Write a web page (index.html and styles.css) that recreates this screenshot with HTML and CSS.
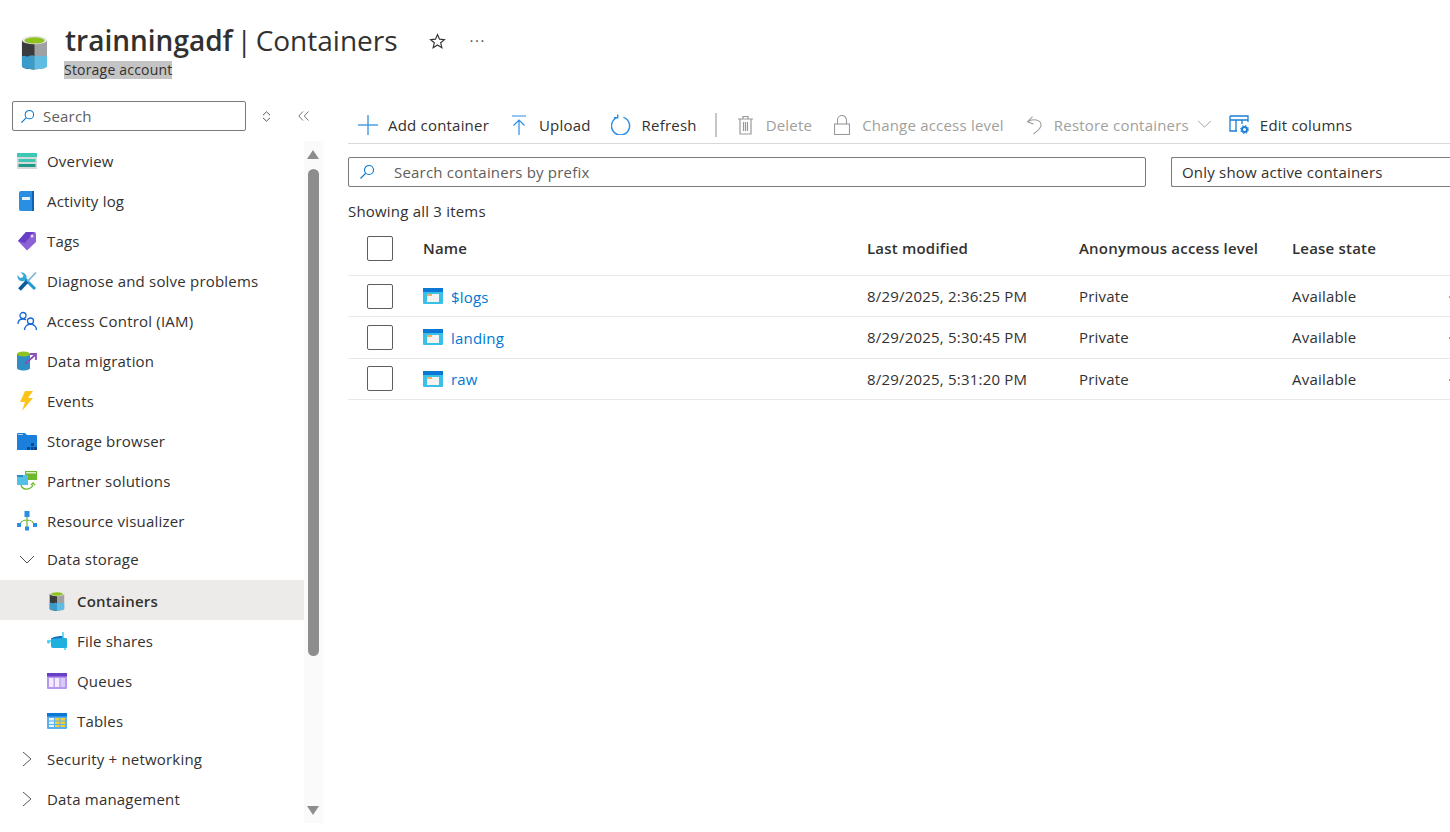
FILE: index.html
```html
<!DOCTYPE html>
<html lang="en">
<head>
<meta charset="UTF-8">
<title>trainningadf | Containers</title>
<link rel="stylesheet" href="styles.css">
</head>
<body>

<svg class="sprites" width="0" height="0">
  <symbol id="i-bucket" viewBox="0 0 28 36">
    <path d="M1 5v27c0 2 6 3.500 13 3.500s13-1.500 13-3.500V5z" fill="#a0a1a2"/>
    <path d="M1 5v27c0 2 6 3.500 13 3.500V5z" fill="#3b3b3d"/>
    <path d="M1 22c3-2 5 1 7 0s4-2 6 0v13.500C7 35.500 1 34 1 32z" fill="#3b9ccb"/>
    <path d="M14 22c3-2 5 1 7 0s4-1 6 0v10c0 2-6 3.500-13 3.500z" fill="#5fbce2"/>
    <ellipse cx="14" cy="5" rx="13" ry="4.500" fill="#e8e8e8"/>
    <ellipse cx="14" cy="5.500" rx="10.500" ry="3.200" fill="#8fc31f"/>
  </symbol>
  <symbol id="i-container" viewBox="0 0 20 16">
    <rect width="20" height="16" rx="1" fill="#38c0e8"/>
    <rect width="20" height="4" fill="#0a78d4"/>
    <rect x="4" y="6" width="12" height="8" fill="#f4f3ef"/>
    <rect x="4" y="6" width="5" height="2" fill="#f0b060"/>
  </symbol>
</svg>

<header class="page-head">
  <svg class="head-logo"><use href="#i-bucket"/></svg>
  <div class="head-text">
    <h1><b>trainningadf</b> | Containers</h1>
    <span class="subtitle">Storage account</span>
  </div>
  <svg class="star" viewBox="0 0 16 16" width="17" height="17"><path d="M8 1.500l1.900 4.300 4.600.4-3.500 3 1.100 4.600L8 11.300l-4.100 2.500L5 9.200l-3.500-3 4.600-.4z" fill="none" stroke="#333" stroke-width="1.100"/></svg>
  <span class="more">···</span>
</header>

<div class="layout">

  <aside class="sidebar">
    <div class="side-top">
      <div class="side-search">
        <svg viewBox="0 0 16 16" width="15" height="15"><circle cx="10" cy="6" r="4.500" fill="none" stroke="#0078d4" stroke-width="1.100"/><path d="M6.800 9.200L1.500 14.500" stroke="#0078d4" stroke-width="1.200"/></svg>
        <span>Search</span>
      </div>
      <svg class="updown" viewBox="0 0 9 11" width="9" height="11"><path d="M1 4.200L4.500 .8 8 4.200M1 6.800l3.500 3.400L8 6.800" fill="none" stroke="#555" stroke-width="1"/></svg>
      <svg class="collapse" viewBox="0 0 11 10" width="11" height="10"><path d="M5 .5L.8 5 5 9.500M10.500.5L6.300 5l4.200 4.500" fill="none" stroke="#666" stroke-width=".9"/></svg>
    </div>

    <div class="side-body">
      <nav class="menu">
        <a class="item">
          <svg viewBox="0 0 20 16"><rect width="20" height="16" fill="#d8d8d8"/><rect width="20" height="4" fill="#3cc8b4"/><rect x="1.500" y="6" width="17" height="3" fill="#3cc8b4"/><rect x="1.500" y="11" width="17" height="3" fill="#1e9a8a"/></svg>
          Overview</a>
        <a class="item">
          <svg viewBox="0 0 20 20"><path d="M2 2a2 2 0 0 1 2-2h13v20H4a2 2 0 0 1-2-2z" fill="#2a8fe0"/><rect x="15" width="2" height="20" fill="#0f62b0"/><rect x="5" y="6" width="8" height="3" fill="#e8f2fb"/></svg>
          Activity log</a>
        <a class="item">
          <svg viewBox="0 0 20 20"><path d="M9 1h8a2 2 0 0 1 2 2v8l-9 8.500L1 10z" fill="#8c62d6"/><path d="M9 1h8L8 12l-7-2z" fill="#6a3fc8"/><circle cx="15" cy="5" r="1.500" fill="#e6dcf7"/></svg>
          Tags</a>
        <a class="item">
          <svg viewBox="0 0 20 20"><path d="M18 18L7 7" stroke="#1e9bd0" stroke-width="3"/><path d="M9 9C11 5 8 1 3.500 1.200l3 3L5.500 6.500 3 7 .5 4C0 8 3 11 6.500 10z" fill="#32a8d8"/><path d="M19 1.500L10 11" stroke="#7fb4d8" stroke-width="1.800"/><path d="M2.500 18.500L10 10.500" stroke="#0a5a9c" stroke-width="3.800"/></svg>
          Diagnose and solve problems</a>
        <a class="item">
          <svg viewBox="0 0 20 20" fill="none" stroke="#1668d8" stroke-width="1.300"><circle cx="6" cy="4.500" r="3"/><path d="M1 13c0-3 2-5 5-5 1.500 0 2.500.5 3 1"/><circle cx="13.500" cy="10" r="3"/><path d="M7.500 19c0-3 2.500-6 6-6s6 3 6 6"/></svg>
          Access Control (IAM)</a>
        <a class="item">
          <svg viewBox="0 0 20 20"><path d="M0 3v14c0 1.500 3 2.500 6.500 2.500S13 18.500 13 17V3z" fill="#2f8fc4"/><ellipse cx="6.500" cy="3" rx="6.500" ry="2.500" fill="#8fc31f"/><path d="M8 13l10-9M13 3h6v6" fill="none" stroke="#8a4fb8" stroke-width="1.800"/></svg>
          Data migration</a>
        <a class="item">
          <svg viewBox="0 0 20 20"><path d="M8 0h8l-5 7h5L5 20l3-9H3z" fill="#fcc419"/></svg>
          Events</a>
        <a class="item">
          <svg viewBox="0 0 20 20"><path d="M0 3a1 1 0 0 1 1-1h7l2 2h9a1 1 0 0 1 1 1v14H0z" fill="#1b7fdc"/><rect x="1" y="3" width="5" height="1" fill="#a9d4f5"/><path d="M10 16h3v3h-3zM14 16h2.500v3H14zM17 16h3v3h-3zM14 12h3v3h-3z" fill="#0a4a8c"/></svg>
          Storage browser</a>
        <a class="item">
          <svg viewBox="0 0 20 20"><rect x="8" width="12" height="9" fill="#6eb82c"/><rect x="9" y="1" width="10" height="1.500" fill="#d9eec4"/><rect y="4" width="11" height="10" fill="#54c0e6"/><rect y="4" width="6" height="2" fill="#2a8ec2"/><path d="M4 14c1 5 9 6 12 0M14 14l2-2 2 2" fill="none" stroke="#6eb82c" stroke-width="1.300"/></svg>
          Partner solutions</a>
        <a class="item">
          <svg viewBox="0 0 20 20"><path d="M10 4v13M3 15c0-4 3-6 7-6s7 2 7 6" fill="none" stroke="#6eb82c" stroke-width="1.200"/><rect x="7.500" width="5" height="6" fill="#2a8ee8"/><rect y="12" width="4" height="4" fill="#2a8ee8"/><rect x="16" y="12" width="4" height="4" fill="#2a8ee8"/><rect x="8" y="15.500" width="4" height="4" fill="#2a8ee8"/></svg>
          Resource visualizer</a>

        <a class="group open">
          <svg viewBox="0 0 16 16"><path d="M1 5l7 7 7-7" fill="none" stroke="#555" stroke-width="1"/></svg>
          Data storage</a>
        <a class="item sub active">
          <svg viewBox="0 0 20 20"><use href="#i-bucket"/></svg>
          Containers</a>
        <a class="item sub">
          <svg viewBox="0 0 20 20"><path d="M4 7h15a1 1 0 0 1 1 1v8a1 1 0 0 1-1 1H6a2 2 0 0 1-2-2z" fill="#20b0e0"/><path d="M4 8c3-3 8-3 12-3v2z" fill="#1a6fc0"/><path d="M0 10h4M16 1v6M18 17v2" stroke="#3fd0f5" stroke-width="1.500"/><circle cx="1.500" cy="11" r="1.500" fill="#3fd0f5"/></svg>
          File shares</a>
        <a class="item sub">
          <svg viewBox="0 0 20 16"><rect width="20" height="16" rx="1" fill="#b796f0"/><rect width="20" height="3.500" fill="#6a3fc8"/><path d="M2 5h4.500v9H2zM7.800 5h4.500v9H7.800z" fill="#f2ecfc"/><path d="M13.500 5H18v9h-4.500z" fill="#d9c9f7"/></svg>
          Queues</a>
        <a class="item sub">
          <svg viewBox="0 0 20 16"><rect width="20" height="16" rx="1" fill="#5ab0ee"/><rect width="20" height="3.500" fill="#0a78d4"/><path d="M2 5h5v2.500H2zM2 8.500h5V11H2zM2 12h5v2H2z" fill="#e8f3fc"/><path d="M8 5h4.500v2.500H8zM13.500 5H18v2.500h-4.500zM8 8.500h4.500V11H8zM13.500 8.500H18V11h-4.500zM8 12h4.500v2H8zM13.500 12H18v2h-4.500z" fill="#f4cf30"/></svg>
          Tables</a>
        <a class="group">
          <svg viewBox="0 0 16 16"><path d="M4 1l8 7-8 7" fill="none" stroke="#555" stroke-width="1"/></svg>
          Security + networking</a>
        <a class="group">
          <svg viewBox="0 0 16 16"><path d="M4 1l8 7-8 7" fill="none" stroke="#555" stroke-width="1"/></svg>
          Data management</a>
      </nav>

      <div class="scroll">
        <span class="arrow up"></span>
        <span class="thumb"></span>
        <span class="arrow down"></span>
      </div>
    </div>
  </aside>

  <main class="content">
    <div class="toolbar">
      <span class="tool"><svg viewBox="0 0 20 20" width="20" height="20"><path d="M10 0v20M0 10h20" stroke="#4c9fe0" stroke-width="1.500"/></svg>Add container</span>
      <span class="tool"><svg viewBox="0 0 20 20" width="20" height="20"><path d="M3 1h14M10 5v15M4.500 10.500L10 5l5.500 5.500" fill="none" stroke="#2a8ee8" stroke-width="1.200"/></svg>Upload</span>
      <span class="tool"><svg viewBox="0 0 22 22" width="21" height="21"><path d="M7 3.500a9.500 9.500 0 1 0 6 0M7 .5V4H3" fill="none" stroke="#2a8ee8" stroke-width="1.500"/></svg>Refresh</span>
      <span class="tool-sep"></span>
      <span class="tool off"><svg viewBox="0 0 17 20" width="17" height="20" fill="none" stroke="#999" stroke-width="1.200"><path d="M1 4h15M6 4V1.500h5V4M3 4v15h11V4M6.500 7v9M8.500 7v9M10.500 7v9"/></svg>Delete</span>
      <span class="tool off"><svg viewBox="0 0 16 20" width="16" height="20" fill="none" stroke="#999" stroke-width="1.100"><rect x=".5" y="9" width="15" height="10.500"/><path d="M3.500 9V5a4.500 4.500 0 0 1 9 0v4"/></svg>Change access level</span>
      <span class="tool off"><svg class="undo" viewBox="0 0 17 20" width="16" height="20" fill="none" stroke="#999" stroke-width="1.100"><path d="M7 1L1.500 6.500 8 9M1.500 6.500C7 3 16 4 16 10c0 4-5 7-8 9.500"/></svg>Restore containers<svg class="caret" viewBox="0 0 16 10" width="15" height="9"><path d="M1 1l7 7 7-7" fill="none" stroke="#999" stroke-width="1"/></svg></span>
      <span class="tool edit"><svg viewBox="0 0 21 20" width="21" height="20" fill="none" stroke="#1a7fd8" stroke-width="1.300"><path d="M1 1h18v6M1 1v15h7M1 5h18M7 5v11M13 5v4"/><circle cx="15.500" cy="14.500" r="2.500" stroke-width="2"/><circle cx="15.500" cy="14.500" r="4" stroke-width="1" stroke-dasharray="1.500 1.640"/></svg>Edit columns</span>
    </div>

    <div class="filters">
      <div class="prefix">
        <svg viewBox="0 0 16 16" width="16" height="16"><circle cx="10" cy="6" r="4.500" fill="none" stroke="#0078d4" stroke-width="1.100"/><path d="M6.800 9.200L1.500 14.500" stroke="#0078d4" stroke-width="1.200"/></svg>
        <span>Search containers by prefix</span>
      </div>
      <div class="state-select">Only show active containers</div>
    </div>

    <p class="count">Showing all 3 items</p>

    <div class="row head">
      <span class="c-check"><i class="box"></i></span>
      <span class="c-name">Name</span>
      <span class="c-date">Last modified</span>
      <span class="c-access">Anonymous access level</span>
      <span class="c-lease">Lease state</span>
    </div>
    <div class="row">
      <span class="c-check"><i class="box"></i></span>
      <span class="c-name"><svg><use href="#i-container"/></svg><a>$logs</a></span>
      <span class="c-date">8/29/2025, 2:36:25 PM</span>
      <span class="c-access">Private</span>
      <span class="c-lease">Available</span>
      <span class="c-more">···</span>
    </div>
    <div class="row mid">
      <span class="c-check"><i class="box"></i></span>
      <span class="c-name"><svg><use href="#i-container"/></svg><a>landing</a></span>
      <span class="c-date">8/29/2025, 5:30:45 PM</span>
      <span class="c-access">Private</span>
      <span class="c-lease">Available</span>
      <span class="c-more">···</span>
    </div>
    <div class="row last">
      <span class="c-check"><i class="box"></i></span>
      <span class="c-name"><svg><use href="#i-container"/></svg><a>raw</a></span>
      <span class="c-date">8/29/2025, 5:31:20 PM</span>
      <span class="c-access">Private</span>
      <span class="c-lease">Available</span>
      <span class="c-more">···</span>
    </div>
  </main>

</div>

</body>
</html>
```

FILE: styles.css
```css
* {
  box-sizing: border-box;
}
html, body {
  height: 832px;
  overflow: hidden;
}
body {
  margin: 0;
  background: white;
  color: #323130;
  font-family: "Open Sans", "Noto Sans", Arial, sans-serif;
  font-size: 15px;
  letter-spacing: 0.2px;
}
.sprites {
  display: block;
  height: 0;
}

/* шапка */
.page-head {
  display: flex;
  align-items: flex-start;
  height: 101px;
  padding: 21px 0 0 21px;
}
.head-logo {
  width: 27px;
  height: 35px;
  margin-top: 14px;
}
.head-text {
  margin-left: 17px;
}
h1 {
  margin: 0;
  font-size: 28px;
  font-weight: 400;
  line-height: 38px;
  letter-spacing: 0;
  word-spacing: -3.5px;
  white-space: nowrap;
}
h1 b {
  font-weight: 600;
}
.subtitle {
  display: inline-block;
  margin: 2px 0 0 -1px;
  background: #c4c4c4;
  font-size: 14px;
  line-height: 18px;
}
.star {
  margin: 12px 0 0 31px;
}
.more {
  margin: 9px 0 0 24px;
  color: #555;
  letter-spacing: 1.5px;
}

.layout {
  display: flex;
}

/* бокове меню */
.sidebar {
  width: 323px;
  flex-shrink: 0;
}
.side-top {
  display: flex;
  align-items: center;
  height: 30px;
  padding-left: 12px;
}
.side-search {
  display: flex;
  align-items: center;
  gap: 8px;
  width: 234px;
  height: 30px;
  padding-left: 7px;
  border: 1px solid #7a7a7a;
  border-radius: 2px;
  color: #605e5c;
}
.updown {
  margin-left: 16px;
}
.collapse {
  margin-left: 27px;
}
.side-body {
  display: flex;
  margin-top: 10px;
  height: 691px;
}
.menu {
  width: 304px;
  flex-shrink: 0;
  overflow: hidden;
}
.item,
.group {
  display: flex;
  align-items: center;
  height: 40px;
  padding-left: 17px;
  gap: 10px;
  white-space: nowrap;
}
.item svg {
  width: 20px;
  height: 20px;
  flex-shrink: 0;
}
.group svg {
  width: 16px;
  height: 16px;
  margin: 0 2px;
  flex-shrink: 0;
}
.group {
  padding-bottom: 2px;
}
.group.open {
  height: 39px;
  padding-bottom: 4px;
}
.item.sub {
  padding-top: 2px;
  padding-left: 47px;
}
.item.active {
  background: #edebe9;
  font-weight: 600;
}

/* смуга прокрутки */
.scroll {
  position: relative;
  width: 19px;
  height: 682px;
  background: #fafafa;
}
.thumb {
  position: absolute;
  top: 28px;
  left: 4px;
  width: 11px;
  height: 487px;
  background: #8d8d8d;
  border-radius: 6px;
}
.arrow {
  position: absolute;
  left: 3px;
  border-left: 6.5px solid transparent;
  border-right: 6.5px solid transparent;
}
.arrow.up {
  top: 9px;
  border-bottom: 9px solid #8d8d8d;
}
.arrow.down {
  bottom: 8px;
  border-top: 9px solid #8d8d8d;
}

/* основна частина */
.content {
  flex: 1;
  min-width: 0;
  padding: 0 0 0 25px;
}
.toolbar {
  display: flex;
  align-items: center;
  height: 43px;
  border-bottom: 1px solid #d9d9d9;
  padding: 5px 0 0 10px;
  gap: 20px;
  white-space: nowrap;
}
.tool {
  display: flex;
  align-items: center;
  gap: 10px;
}
.tool.off {
  gap: 12px;
  color: #a19f9d;
}
.tool.off + .tool.off {
  margin-left: 2px;
}
.undo {
  overflow: visible;
}
.tool.edit {
  margin-left: -3px;
}
.tool-sep {
  width: 2px;
  height: 24px;
  margin-left: -2px;
  background: #c8c6c4;
}
.caret {
  margin-left: -4px;
}
.filters {
  display: flex;
  margin-top: 13px;
}
.prefix {
  display: flex;
  align-items: center;
  gap: 19px;
  width: 798px;
  height: 30px;
  padding-left: 10px;
  border: 1px solid #7a7a7a;
  border-radius: 2px;
  color: #605e5c;
  flex-shrink: 0;
}
.state-select {
  width: 300px;
  height: 30px;
  margin-left: 25px;
  padding-left: 10px;
  line-height: 28px;
  border: 1px solid #7a7a7a;
  border-right: none;
  border-radius: 2px;
  white-space: nowrap;
  flex-shrink: 0;
}
.count {
  margin: 14px 0 0;
  line-height: 20px;
}
.row {
  display: flex;
  align-items: center;
  height: 41px;
  border-bottom: 1px solid #e8e8e8;
  white-space: nowrap;
}
.row.mid {
  height: 42px;
  padding-bottom: 1px;
}
.row.last {
  padding-bottom: 1px;
}
.row.head {
  height: 55px;
  padding-bottom: 1px;
  font-weight: 600;
}
.row.head .box {
  margin-top: 2px;
}
.row span {
  flex-shrink: 0;
}
.box {
  display: block;
  width: 26px;
  height: 25px;
  border: 1px solid #605e5c;
  border-radius: 2px;
}
.c-check {
  width: 75px;
  padding-left: 19px;
}
.c-name {
  display: flex;
  align-items: center;
  width: 444px;
}
.c-name svg {
  width: 20px;
  height: 16px;
  margin-right: 8px;
}
.c-name a {
  padding-top: 1px;
  color: #0078d4;
}
.c-date {
  width: 212px;
}
.c-access {
  width: 213px;
}
.c-lease {
  width: 156px;
}
.c-more {
  color: #0078d4;
}
```
